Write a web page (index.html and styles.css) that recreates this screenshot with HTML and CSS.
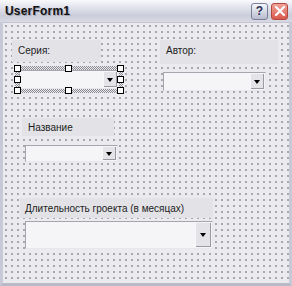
FILE: index.html
```html
<!DOCTYPE html>
<html lang="ru">
<head>
    <meta charset="UTF-8">
    <title>UserForm1</title>
    <link rel="stylesheet" href="styles.css">
</head>
<body>
   <div class="window">
    <div class="titlebar">
        <span class="title">UserForm1</span>
        <div class="caption-buttons">
            <span class="btn help">?</span>
            <span class="btn close">
                <svg width="12" height="12" viewBox="0 0 12 12"><path d="M2 2 L10 10 M10 2 L2 10" stroke="#fff" stroke-width="2.2" stroke-linecap="round"/></svg>
            </span>
        </div>
    </div>

    <div class="canvas">
        <div class="label lbl-series">Серия:</div>
        <div class="selection sel-series">
            <span class="handle h-tl"></span>
            <span class="handle h-tc"></span>
            <span class="handle h-tr"></span>
            <span class="handle h-ml"></span>
            <span class="handle h-mr"></span>
            <span class="handle h-bl"></span>
            <span class="handle h-bc"></span>
            <span class="handle h-br"></span>
            <div class="combo combo-fill"><span class="arrow"></span></div>
        </div>

        <div class="label lbl-author">Автор:</div>
        <div class="combo cb-author"><span class="arrow"></span></div>

        <div class="label lbl-name">Название</div>
        <div class="combo cb-name"><span class="arrow"></span></div>

        <div class="label lbl-length">Длительность гроекта (в месяцах)</div>
        <div class="combo cb-length"><span class="arrow"></span></div>
    </div>
   </div>
</body>
</html>
```

FILE: styles.css
```css
body {
    margin: 0;
    background: #ffffff;
    font-family: "Liberation Sans", Arial, sans-serif;
}

.window {
    width: 292px;
    height: 286px;
    box-sizing: border-box;
    display: flex;
    flex-direction: column;
    background: #d9dae3;
    border-left: 3px solid #c8c9d6;
    border-right: 3px solid #c8c9d6;
    border-bottom: 3px solid #b9bac8;
}

.titlebar {
    height: 22px;
    margin: 0 -3px;
    padding: 0 4px 0 5px;
    display: flex;
    align-items: center;
    justify-content: space-between;
    background: linear-gradient(to bottom, #fafafc 0%, #e4e5ee 30%, #cbcdda 70%, #d8d9e4 100%);
}

.title {
    font-size: 12px;
    font-weight: bold;
    color: #111;
    text-shadow: 1px 1px 0 #a4a6b4;
    letter-spacing: 0.2px;
}

.caption-buttons {
    display: flex;
    gap: 3px;
}

.btn {
    width: 17px;
    height: 17px;
    box-sizing: border-box;
    border-radius: 3px;
    display: flex;
    align-items: center;
    justify-content: center;
}
.help {
    background: linear-gradient(to bottom, #f6f7fb, #b7bbcd);
    border: 1px solid #7b7f98;
    color: #2a2f58;
    font-weight: bold;
    font-size: 12px;
}
.close {
    background: linear-gradient(to bottom, #f1a39a, #d9594b);
    border: 1px solid #b04a40;
}

.canvas {
    flex: 1;
    position: relative;
    background-color: #ebebef;
    background-image: radial-gradient(circle at 1px 1px, #7c7c84 0.55px, transparent 0.95px);
    background-size: 6px 6px;
    background-position: 2px 2px;
    border-top: 1px solid #c4c5d0;
}

/* controls on the designer canvas */
.label {
    position: absolute;
    background: #e3e3e7;
    font-size: 10px;
    color: #1c1c1c;
    padding: 5px 0 0 6px;
    box-sizing: border-box;
}
.lbl-series { left: 9px; top: 17px; width: 89px; height: 22px; }
.lbl-author { left: 157px; top: 17px; width: 118px; height: 24px; }
.lbl-name   { left: 19px; top: 95px; width: 92px; height: 18px; padding-top: 4px; }
.lbl-length { left: 17px; top: 175px; width: 193px; height: 20px; padding: 5px 0 0 5px; }

.combo {
    position: absolute;
    box-sizing: border-box;
    background: #f5f5f8;
    border-top: 1px solid #a6a6ae;
    border-left: 1px solid #a6a6ae;
    border-right: 1px solid #e8e8ec;
    border-bottom: 1px solid #e8e8ec;
}
.arrow {
    position: absolute;
    right: 1px;
    top: 1px;
    bottom: 1px;
    width: 13px;
    background: #e4e4e8;
    border-left: 1px solid #f8f8fa;
    box-shadow: inset -1px -1px 0 #9a9aa2;
}
.arrow::after {
    content: "";
    position: absolute;
    left: 3px;
    top: 50%;
    margin-top: -2px;
    border-left: 3.5px solid transparent;
    border-right: 3.5px solid transparent;
    border-top: 4px solid #000;
}

.cb-author { left: 160px; top: 49px; width: 103px; height: 19px; }
.cb-name   { left: 22px; top: 122px; width: 93px; height: 17px; }
.cb-length { left: 22px; top: 198px; width: 188px; height: 28px; }
.cb-length .arrow { width: 15px; }
.cb-length .arrow::after { left: 4px; }

/* selected control with hatched frame and handles */
.selection {
    position: absolute;
    left: 12px;
    top: 43px;
    width: 108px;
    height: 27px;
    background-color: #ebebef;
    background-image:
        linear-gradient(45deg, #8a8a90 25%, transparent 25%, transparent 75%, #8a8a90 75%),
        linear-gradient(45deg, #8a8a90 25%, transparent 25%, transparent 75%, #8a8a90 75%);
    background-size: 2px 2px;
    background-position: 0 0, 1px 1px;
}
.combo-fill {
    left: 4px;
    top: 4px;
    right: 4px;
    bottom: 4px;
}
.handle {
    position: absolute;
    width: 5px;
    height: 5px;
    background: #fff;
    border: 1px solid #000;
    z-index: 2;
}
.h-tl { left: -1px; top: -1px; }
.h-tc { left: 50px; top: -1px; }
.h-tr { right: -1px; top: -1px; }
.h-ml { left: -1px; top: 10px; }
.h-mr { right: -1px; top: 10px; }
.h-bl { left: -1px; bottom: -1px; }
.h-bc { left: 50px; bottom: -1px; }
.h-br { right: -1px; bottom: -1px; }
```
